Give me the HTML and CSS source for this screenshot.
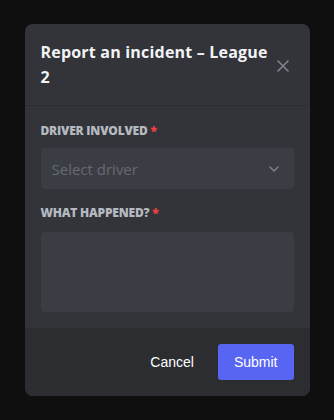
FILE: index.html
```html
<!DOCTYPE html>
<html>
<head>
<meta charset="utf-8">
<link rel="stylesheet" href="styles.css">
</head>
<body>
<div class="modal">
  <div class="header">
    <h2 class="title">Report an incident – League 2</h2>
    <button class="close" aria-label="Close">
      <svg width="12" height="12" viewBox="0 0 12 12"><path d="M1 1L11 11M11 1L1 11" stroke="currentColor" stroke-width="1.6" stroke-linecap="round"/></svg>
    </button>
  </div>
  <div class="body">
    <label class="label">Driver involved <span class="req">*</span></label>
    <div class="select">
      <span class="placeholder">Select driver</span>
      <svg class="chev" width="10" height="6" viewBox="0 0 10 6"><path d="M1 1L5 5L9 1" fill="none" stroke="currentColor" stroke-width="1.3" stroke-linecap="round" stroke-linejoin="round"/></svg>
    </div>
    <label class="label second">What happened? <span class="req">*</span></label>
    <div class="textarea"></div>
  </div>
  <div class="footer">
    <button class="btn cancel">Cancel</button>
    <button class="btn submit">Submit</button>
  </div>
</div>
</body>
</html>
```
FILE: styles.css
```css
html, body {
  margin: 0;
  height: 100%;
}
body {
  background: #0f0f10;
  display: flex;
  align-items: center;
  justify-content: center;
  font-family: "Open Sans", "Liberation Sans", sans-serif;
}
.modal {
  width: 285px;
  height: 372px;
  background: #323439;
  border-radius: 8px;
  overflow: hidden;
  display: flex;
  flex-direction: column;
}
.header {
  display: flex;
  align-items: center;
  padding: 16px 16px 15px 16px;
  border-bottom: 1px solid #2b2d31;
}
.title {
  flex: 1;
  margin: 0;
  color: #f2f3f5;
  font-size: 16px;
  font-weight: 700;
  line-height: 25px;
  letter-spacing: 0.2px;
  padding-right: 2px;
}
.close {
  background: none;
  border: 0;
  padding: 0;
  width: 16px;
  height: 16px;
  color: #80848e;
  display: flex;
  align-items: center;
  justify-content: center;
  margin-right: 3px;
  margin-top: 2px;
}
.body {
  flex: 1;
  padding: 17px 16px 0 16px;
  display: flex;
  flex-direction: column;
}
.label {
  display: block;
  color: #b5bac1;
  font-size: 12px;
  font-weight: 800;
  line-height: 16px;
  text-transform: uppercase;
  letter-spacing: -0.2px;
  margin-bottom: 9px;
}
.label.second {
  margin-top: 16px;
  margin-bottom: 11px;
}
.req {
  color: #f23f43;
}
.select {
  height: 41px;
  background: #3b3d45;
  border-radius: 4px;
  display: flex;
  align-items: center;
  justify-content: space-between;
  padding: 0 15px 0 11px;
}
.placeholder {
  color: #666972;
  font-size: 15px;
}
.chev {
  color: #80848e;
}
.textarea {
  height: 80px;
  background: #3b3d45;
  border-radius: 4px;
}
.footer {
  height: 68px;
  background: #2b2d31;
  display: flex;
  align-items: center;
  justify-content: flex-end;
  padding: 0 16px;
  gap: 8px;
}
.btn {
  height: 36px;
  border: 0;
  border-radius: 3px;
  padding: 0 16px;
  font-family: "Liberation Sans", Arial, sans-serif;
  font-size: 14px;
  color: #ffffff;
  background: none;
}
.submit {
  background: #5865f2;
}
```
